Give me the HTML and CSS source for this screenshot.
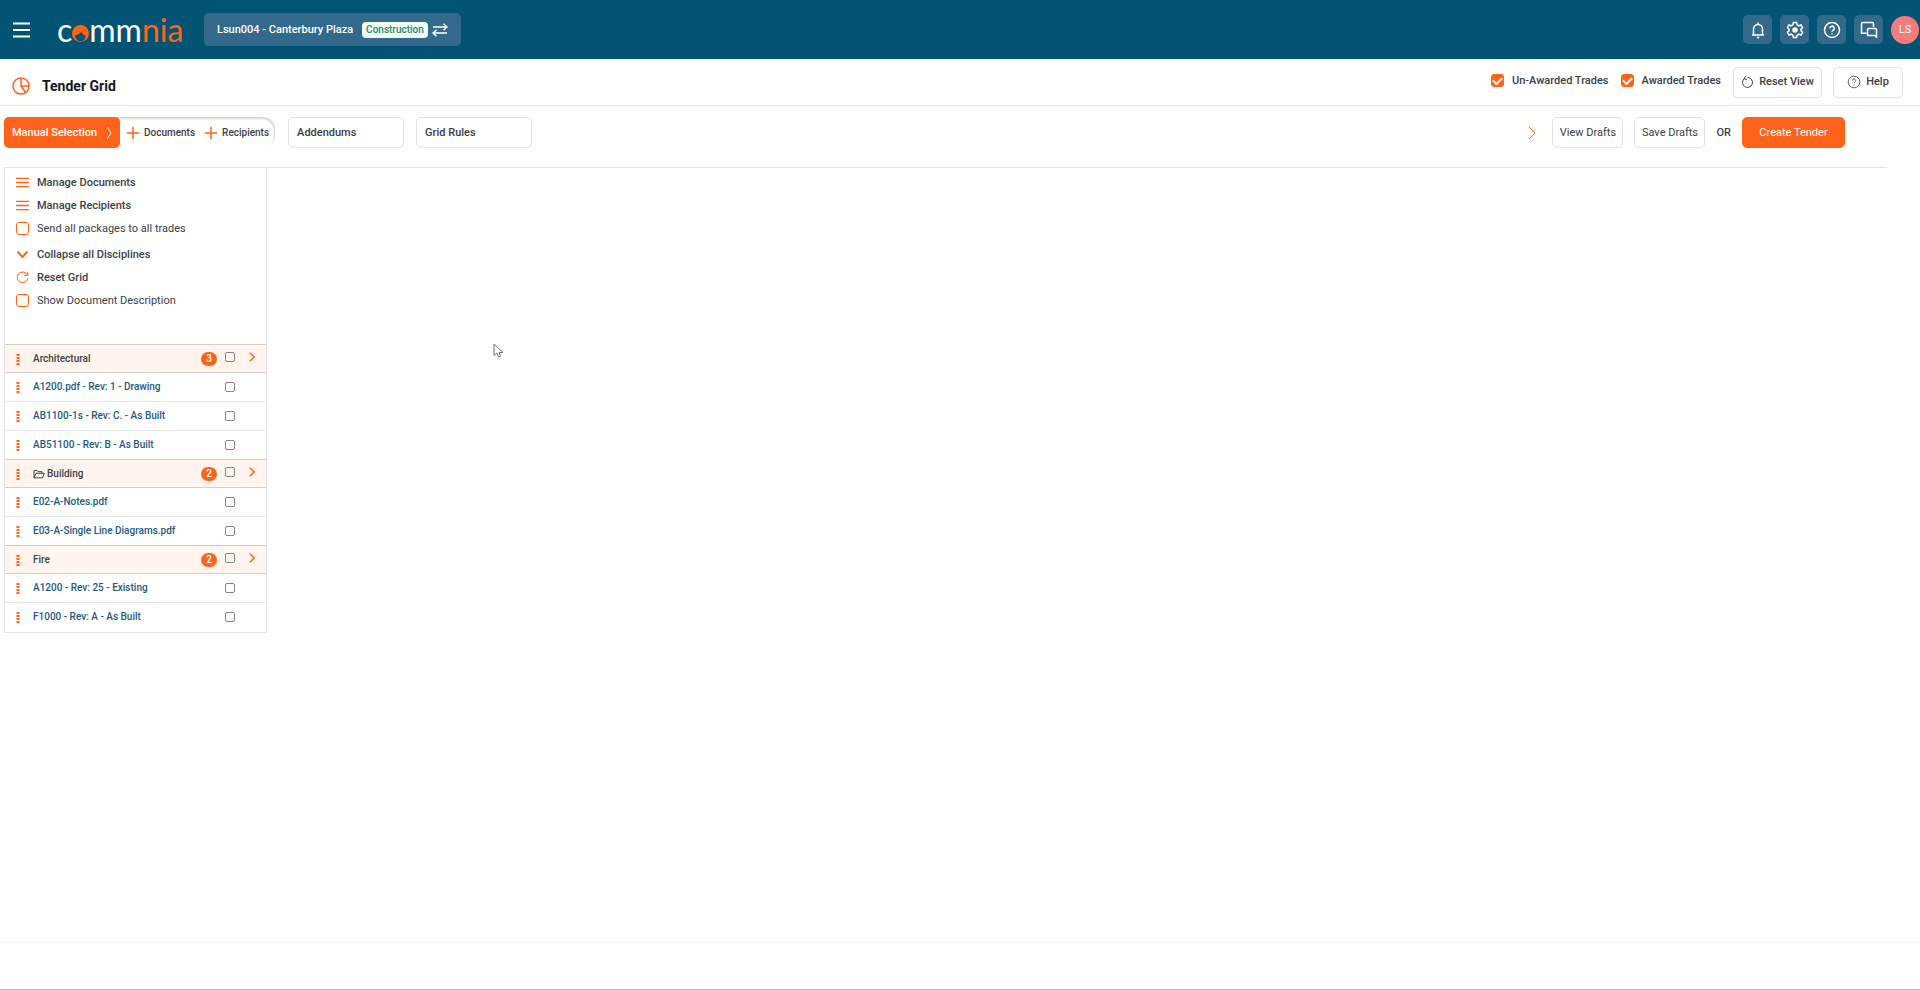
FILE: index.html
```html
<!DOCTYPE html>
<html lang="en">
<head>
  <meta charset="UTF-8" />
  <meta name="viewport" content="width=device-width, initial-scale=1.0" />
  <title>Tender Grid</title>
  <link rel="stylesheet" href="styles.css">
</head>
<body>

  <!-- Shared icons -->
  <svg class="sprite" aria-hidden="true">
    <symbol id="bars" viewBox="0 0 14 12"><path d="M0 1.5h14M0 6h14M0 10.5h14" /></symbol>
    <symbol id="chevron" viewBox="0 0 8 14"><path d="M1 1l6 6-6 6" /></symbol>
    <symbol id="plus" viewBox="0 0 12 12"><path d="M6 0v12M0 6h12" /></symbol>
    <symbol id="dots" viewBox="0 0 4 12"><path d="M.5 2h3M.5 5h3M.5 8h3M.5 11h3" /></symbol>
    <symbol id="question" viewBox="0 0 18 18"><circle cx="9" cy="9" r="7.5" /><path d="M6.8 7.3a2.2 2.2 0 1 1 3.2 2c-.8.4-1 .8-1 1.5M9 12.2v1.3" /></symbol>
  </svg>

  <header class="topbar">
    <button class="menu-btn" aria-label="Menu">
      <svg width="17" height="16" viewBox="0 0 17 16"><path d="M0 1.5h17M0 8h17M0 14.5h17" /></svg>
    </button>
    <a class="logo" href="#" aria-label="commnia">
      <span>c</span>
      <svg width="17" height="17" viewBox="0 0 17 17">
        <circle class="hair" cx="8.5" cy="8.5" r="8.5" />
        <path class="face" d="M3 10.500C6 10 8.500 8.500 9.500 6.500c.5 2 2 3.500 4 4.200C13.500 14 11.500 16.300 8.800 16.300S3.300 14 3 10.500z" />
      </svg>
      <span>mm</span><span class="accent">nia</span>
    </a>
    <button class="project">
      <span>Lsun004 - Canterbury Plaza</span>
      <span class="tag">Construction</span>
      <svg width="16" height="14" viewBox="0 0 16 14"><path d="M1 4h14M11.5.8L15 4l-3.500 3.200M15 10H1M4.500 6.800L1 10l3.500 3.200" /></svg>
    </button>
    <div class="top-actions">
      <button class="icon-btn" aria-label="Notifications">
        <svg width="18" height="18" viewBox="0 0 18 18"><path d="M3 14h12M4.5 14V8a4.5 4.5 0 0 1 9 0v6M9 3.5V1.5M7.8 16.500h2.400" /></svg>
      </button>
      <button class="icon-btn" aria-label="Settings">
        <svg width="18" height="18" viewBox="0 0 18 18"><path d="M7.400 1.500h3.200l.5 2.300 1.700 1 2.200-.8 1.600 2.800-1.700 1.500v1.400l1.700 1.500-1.600 2.800-2.200-.8-1.700 1-.5 2.300H7.400l-.5-2.300-1.700-1-2.200.8-1.600-2.800 1.700-1.500V8.300L1.400 6.800 3 4l2.200.8 1.700-1z" /><circle class="dot" cx="9" cy="9" r="2" /></svg>
      </button>
      <button class="icon-btn" aria-label="Help">
        <svg width="18" height="18"><use href="#question" /></svg>
      </button>
      <button class="icon-btn" aria-label="Messages">
        <svg width="18" height="18" viewBox="0 0 18 18"><path d="M13.500 6V2.800c0-.8-.5-1.300-1.300-1.300H2.800c-.8 0-1.300.5-1.300 1.300v9.400h5" /><path d="M8.500 7.500h7c.6 0 1 .4 1 1V16l-2-1.500h-6c-.6 0-1-.4-1-1v-5c0-.6.4-1 1-1z" /></svg>
      </button>
      <a class="avatar" href="#">LS</a>
    </div>
  </header>

  <div class="page-head">
    <div class="page-title">
      <svg width="18" height="18" viewBox="0 0 18 18"><circle cx="9" cy="9" r="8" /><path d="M9 1v8h8M9 9l4.500 6.500" /></svg>
      <h1>Tender Grid</h1>
    </div>
    <div class="view-options">
      <label><input type="checkbox" class="check-orange" checked> Un-Awarded Trades</label>
      <label><input type="checkbox" class="check-orange" checked> Awarded Trades</label>
    </div>
    <button class="btn btn-bold btn-reset">
      <svg width="12" height="12" viewBox="0 0 12 12"><path d="M3.600 2.400A5 5 0 1 0 7 1.500M4.500.2L3.200 2.700l2.600 1" /></svg>
      Reset View
    </button>
    <button class="btn btn-bold btn-help">
      <svg width="14" height="14"><use href="#question" /></svg>
      Help
    </button>
  </div>

  <div class="toolbar">
    <div class="selection">
      <button class="btn-manual">Manual Selection <svg width="5" height="12" viewBox="0 0 5 12"><path d="M.5.5L4 6 .5 11.500" /></svg></button>
      <button class="add"><svg width="12" height="12"><use href="#plus" /></svg>Documents</button>
      <button class="add"><svg width="12" height="12"><use href="#plus" /></svg>Recipients</button>
    </div>
    <button class="btn btn-tab">Addendums</button>
    <button class="btn btn-tab">Grid Rules</button>
    <div class="tender-actions">
      <button class="next" aria-label="Next"><svg width="8" height="14"><use href="#chevron" /></svg></button>
      <button class="btn">View Drafts</button>
      <button class="btn">Save Drafts</button>
      <span class="or">OR</span>
      <button class="btn btn-primary">Create Tender</button>
    </div>
  </div>

  <main>
    <aside class="sidebar">
      <ul class="options">
        <li><a href="#"><svg class="lines" width="13" height="11"><use href="#bars" /></svg>Manage Documents</a></li>
        <li><a href="#"><svg class="lines" width="13" height="11"><use href="#bars" /></svg>Manage Recipients</a></li>
        <li><label><input type="checkbox" class="check-orange">Send all packages to all trades</label></li>
      </ul>
      <ul class="options">
        <li><a href="#"><svg class="thick" width="13" height="9" viewBox="0 0 13 9"><path d="M1.500 1.500l5 5.500 5-5.500" /></svg>Collapse all Disciplines</a></li>
        <li><a href="#"><svg width="13" height="13" viewBox="0 0 13 13"><path d="M11.300 4A5.300 5.300 0 1 0 11.800 7M11.800.8v3.600H8.500" /></svg>Reset Grid</a></li>
        <li><label><input type="checkbox" class="check-orange">Show Document Description</label></li>
      </ul>

      <table class="documents">
        <tr class="group">
          <td class="grip"><svg width="4" height="12"><use href="#dots" /></svg></td>
          <td>Architectural</td>
          <td class="count"><span class="badge">3</span></td>
          <td class="pick"><input type="checkbox" aria-label="Architectural"></td>
          <td class="open"><svg width="6" height="10"><use href="#chevron" /></svg></td>
        </tr>
        <tr>
          <td class="grip"><svg width="4" height="12"><use href="#dots" /></svg></td>
          <td colspan="2"><a href="#">A1200.pdf - Rev: 1 - Drawing</a></td>
          <td class="pick"><input type="checkbox" aria-label="A1200.pdf"></td>
          <td></td>
        </tr>
        <tr>
          <td class="grip"><svg width="4" height="12"><use href="#dots" /></svg></td>
          <td colspan="2"><a href="#">AB1100-1s - Rev: C. - As Built</a></td>
          <td class="pick"><input type="checkbox" aria-label="AB1100-1s"></td>
          <td></td>
        </tr>
        <tr>
          <td class="grip"><svg width="4" height="12"><use href="#dots" /></svg></td>
          <td colspan="2"><a href="#">AB51100 - Rev: B - As Built</a></td>
          <td class="pick"><input type="checkbox" aria-label="AB51100"></td>
          <td></td>
        </tr>
        <tr class="group">
          <td class="grip"><svg width="4" height="12"><use href="#dots" /></svg></td>
          <td><svg class="folder" width="12" height="10" viewBox="0 0 12 10"><path d="M1 8.500V1.500h3l1 1.200h4v1.500M1 8.800l2-4.500h8.300L9.500 8.800z" /></svg>Building</td>
          <td class="count"><span class="badge">2</span></td>
          <td class="pick"><input type="checkbox" aria-label="Building"></td>
          <td class="open"><svg width="6" height="10"><use href="#chevron" /></svg></td>
        </tr>
        <tr>
          <td class="grip"><svg width="4" height="12"><use href="#dots" /></svg></td>
          <td colspan="2"><a href="#">E02-A-Notes.pdf</a></td>
          <td class="pick"><input type="checkbox" aria-label="E02-A-Notes.pdf"></td>
          <td></td>
        </tr>
        <tr>
          <td class="grip"><svg width="4" height="12"><use href="#dots" /></svg></td>
          <td colspan="2"><a href="#">E03-A-Single Line Diagrams.pdf</a></td>
          <td class="pick"><input type="checkbox" aria-label="E03-A-Single Line Diagrams.pdf"></td>
          <td></td>
        </tr>
        <tr class="group">
          <td class="grip"><svg width="4" height="12"><use href="#dots" /></svg></td>
          <td>Fire</td>
          <td class="count"><span class="badge">2</span></td>
          <td class="pick"><input type="checkbox" aria-label="Fire"></td>
          <td class="open"><svg width="6" height="10"><use href="#chevron" /></svg></td>
        </tr>
        <tr>
          <td class="grip"><svg width="4" height="12"><use href="#dots" /></svg></td>
          <td colspan="2"><a href="#">A1200 - Rev: 25 - Existing</a></td>
          <td class="pick"><input type="checkbox" aria-label="A1200"></td>
          <td></td>
        </tr>
        <tr>
          <td class="grip"><svg width="4" height="12"><use href="#dots" /></svg></td>
          <td colspan="2"><a href="#">F1000 - Rev: A - As Built</a></td>
          <td class="pick"><input type="checkbox" aria-label="F1000"></td>
          <td></td>
        </tr>
      </table>
    </aside>
  </main>

  <footer></footer>

  <!-- Mouse pointer -->
  <svg class="pointer" width="12" height="16" viewBox="0 0 12 16"><path d="M1 1v11.500l3-2.500 1.500 4 2-.8L6 9.500h4z" /></svg>

</body>
</html>
```
FILE: styles.css
```css
:root {
  --orange: #ff6319;
  --navy: #035474;
  --slate: #336a8c;
  --line: #e4e5ea;
  --text: #3c4148;
}

* {
  box-sizing: border-box;
}

body {
  margin: 0;
  min-height: 100vh;
  display: flex;
  flex-direction: column;
  font-family: Roboto, "Noto Sans", sans-serif;
  font-size: 11px;
  line-height: 16px;
  color: var(--text);
  background-color: #fefefd;
}

svg {
  fill: none;
  stroke: currentColor;
  flex-shrink: 0;
}

button {
  font: inherit;
  color: inherit;
  background: none;
  border: none;
  padding: 0;
  display: flex;
  align-items: center;
  cursor: pointer;
  white-space: nowrap;
}

a {
  color: inherit;
  text-decoration: none;
}

.sprite {
  position: absolute;
  width: 0;
  height: 0;
}

/* Top bar */
.topbar {
  display: flex;
  align-items: center;
  height: 59px;
  padding: 0 1px 0 13px;
  background-color: var(--navy);
  color: white;
}

.menu-btn svg {
  stroke-width: 2;
}

.logo {
  display: flex;
  align-items: baseline;
  margin-left: 27px;
  width: 124px;
  font-family: Lato, sans-serif;
  font-size: 32px;
  line-height: 40px;
}

.logo .accent {
  color: var(--orange);
}

.logo .hair {
  fill: var(--orange);
  stroke: none;
}

.logo .face {
  fill: var(--navy);
  stroke: none;
}

.project {
  gap: 9px;
  height: 33px;
  margin-left: 23px;
  padding: 0 13px;
  border-radius: 5px;
  background-color: var(--slate);
  font-weight: 500;
}

.project svg {
  stroke-width: 1.5;
  margin-left: -5px;
}

.tag {
  padding: 0 4px;
  border-radius: 4px;
  background-color: #effcf8;
  color: #2c8763;
  font-size: 10px;
}

.top-actions {
  display: flex;
  align-items: center;
  gap: 8px;
  margin-left: auto;
}

.icon-btn {
  width: 29px;
  height: 29px;
  justify-content: center;
  border-radius: 5px;
  background-color: var(--slate);
}

.icon-btn svg {
  stroke-width: 1.5;
}

.icon-btn .dot {
  fill: white;
}

.avatar {
  width: 28px;
  height: 28px;
  border-radius: 50%;
  background-color: #f67c7c;
  line-height: 28px;
  text-align: center;
}

/* Page heading */
.page-head {
  display: flex;
  align-items: center;
  height: 47px;
  padding: 0 17px 0 12px;
  border-bottom: 1px solid var(--line);
}

.page-title {
  display: flex;
  align-items: center;
  padding-top: 8px;
}

.page-title svg {
  color: var(--orange);
  stroke-width: 1.5;
}

h1 {
  margin: 0 0 0 12px;
  font-size: 14px;
  font-weight: 700;
  color: #14171f;
}

.view-options {
  display: flex;
  gap: 12px;
  margin-left: auto;
  margin-right: 12px;
  padding-bottom: 3px;
  font-weight: 500;
}

.view-options label {
  display: flex;
  align-items: center;
  gap: 8px;
}

.check-orange {
  appearance: none;
  width: 13px;
  height: 13px;
  margin: 0;
  border: 1px solid var(--orange);
  border-radius: 3px;
  display: grid;
  place-items: center;
}

.check-orange:checked {
  background-color: var(--orange);
}

.check-orange:checked::before {
  content: "";
  width: 7px;
  height: 4px;
  border-left: 2px solid white;
  border-bottom: 2px solid white;
  transform: translateY(-1px) rotate(-45deg);
}

.btn {
  height: 31px;
  padding: 0 6px;
  border: 1px solid #dfe1ec;
  border-radius: 5px;
  justify-content: center;
}

.btn-bold {
  gap: 6px;
  font-weight: 500;
}

.btn-reset {
  min-width: 89px;
}

.btn-help {
  min-width: 70px;
  margin-left: 11px;
  gap: 5px;
}

/* Toolbar */
.toolbar {
  display: flex;
  align-items: flex-start;
  height: 61px;
  padding: 11px 75px 0 4px;
}

.selection {
  display: flex;
  height: 31px;
  padding-right: 6px;
  margin-right: 13px;
  border-radius: 5px 12px 12px 5px;
  box-shadow: inset -1px 2px 2px #d5d5da;
  font-weight: 500;
}

.btn-manual {
  min-width: 116px;
  justify-content: space-between;
  padding: 0 8px;
  border-radius: 5px;
  background-color: var(--orange);
  color: white;
}

.add {
  gap: 5px;
  margin-left: 7px;
  font-size: 10px;
}

.add svg {
  color: var(--orange);
  stroke-width: 1.5;
}

.add + .add {
  margin-left: 10px;
}

.btn-tab {
  width: 116px;
  margin-right: 12px;
  padding: 0 8px;
  justify-content: flex-start;
  font-weight: 500;
}

.tender-actions {
  display: flex;
  align-items: center;
  gap: 11px;
  margin-left: auto;
}

.tender-actions .btn {
  min-width: 71px;
}

.next {
  margin-right: 5px;
  color: var(--orange);
}

.or {
  font-weight: 500;
}

.tender-actions .btn-primary {
  min-width: 103px;
  border-color: var(--orange);
  background-color: var(--orange);
  color: white;
}

/* Sidebar */
main {
  flex: 1;
  margin: 0 33px 0 4px;
  border-top: 1px solid var(--line);
}

.sidebar {
  width: 263px;
  padding-top: 3px;
  border: 1px solid var(--line);
  border-top: none;
}

.options {
  list-style: none;
  margin: 0 0 3px;
  padding: 0 11px;
}

.options a,
.options label {
  display: flex;
  align-items: center;
  gap: 8px;
  height: 23px;
}

.options a {
  font-weight: 500;
}

.options svg {
  color: var(--orange);
}

.options .lines {
  stroke-width: 1.5;
}

.options .thick {
  stroke-width: 2;
}

.documents {
  width: 100%;
  margin-top: 32px;
  border-collapse: collapse;
  table-layout: fixed;
  font-size: 10px;
  font-weight: 500;
}

.documents td {
  height: 29px;
  padding: 0;
  border-top: 1px solid var(--line);
}

.documents svg {
  vertical-align: middle;
}

.documents a {
  color: #1f5a86;
}

.documents .group {
  background-color: #fff4ee;
}

.documents .group td {
  height: 28px;
  border-top: 1px solid #cfcfd4;
  border-bottom: 1px solid #cfcfd4;
}

.documents .grip {
  width: 28px;
  padding-left: 11px;
  color: var(--orange);
  line-height: 0;
}

.grip svg {
  stroke-width: 2;
}

.documents .count {
  width: 24px;
}

.documents .pick {
  width: 24px;
}

.documents .open {
  width: 17px;
  color: var(--orange);
}

.documents .group .pick,
.documents .group .open {
  padding-bottom: 3px;
}

.open svg {
  stroke-width: 2;
}

.documents .folder {
  margin-right: 2px;
}

.badge {
  display: block;
  width: 16px;
  height: 14px;
  border-radius: 7px;
  background-color: var(--orange);
  color: white;
  line-height: 14px;
  text-align: center;
}

.pick input {
  appearance: none;
  display: block;
  width: 10px;
  height: 10px;
  margin: 0;
  border: 1px solid #85858a;
  border-radius: 2px;
}

footer {
  height: 48px;
  border-top: 1px solid #f3f3f3;
  border-bottom: 1px solid #b5c8d2;
}

.pointer {
  position: absolute;
  left: 493px;
  top: 343px;
  color: #77777c;
}
```
